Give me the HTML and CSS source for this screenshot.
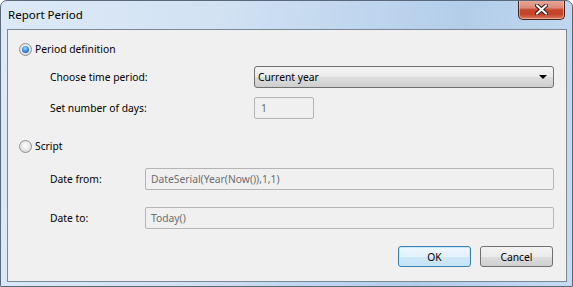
FILE: index.html
```html
<!DOCTYPE html>
<html lang="en">
<head>
    <meta charset="UTF-8">
    <title>Report Period</title>
    <link rel="stylesheet" href="styles.css">
</head>
<body>
    <div class="window">
        <div class="titlebar">
            <span class="title">Report Period</span>
            <div class="close">
                <svg width="13" height="11" viewBox="0 0 13 11">
                    <path d="M2 1.5 L11 9.5 M11 1.5 L2 9.5" stroke="#3a1a14" stroke-width="4" stroke-linecap="square"/>
                    <path d="M2 1.5 L11 9.5 M11 1.5 L2 9.5" stroke="#ffffff" stroke-width="2" stroke-linecap="square"/>
                </svg>
            </div>
        </div>

        <div class="client">
            <div class="radio-row">
                <span class="radio checked"></span>
                <span>Period definition</span>
            </div>

            <div class="field-row first">
                <span class="label wide">Choose time period:</span>
                <div class="dropdown">
                    <span>Current year</span>
                    <span class="arrow"></span>
                </div>
            </div>

            <div class="field-row days">
                <span class="label wide">Set number of days:</span>
                <div class="textbox small">1</div>
            </div>

            <div class="radio-row script">
                <span class="radio"></span>
                <span>Script</span>
            </div>

            <div class="field-row date-from">
                <span class="label">Date from:</span>
                <div class="textbox">DateSerial(Year(Now()),1,1)</div>
            </div>

            <div class="field-row date-to">
                <span class="label">Date to:</span>
                <div class="textbox">Today()</div>
            </div>

            <div class="buttons">
                <button class="btn default">OK</button>
                <button class="btn">Cancel</button>
            </div>
        </div>
    </div>
</body>
</html>
```

FILE: styles.css
```css
body {
    margin: 0;
    background: #ffffff;
    font-family: 'Noto Sans', 'Liberation Sans', sans-serif;
    font-size: 10.3px;
    color: #000;
}
.window {
    width: 573px;
    height: 287px;
    box-sizing: border-box;
    border: 1px solid #59687a;
    border-radius: 7px 7px 1px 1px;
    background: linear-gradient(100deg, #dde9f6 0%, #d2e2f3 35%, #bed5ee 60%, #b3cde9 75%, #c6dbf1 100%);
    display: flex;
    flex-direction: column;
    overflow: hidden;
}
.titlebar {
    height: 28px;
    display: flex;
    align-items: center;
    padding-left: 7px;
}
.title {
    font-size: 11.5px;
    color: #000;
    flex: 1;
    margin-top: -1px;
}
.close {
    align-self: flex-start;
    margin-top: -1px;
    margin-right: 7px;
    width: 47px;
    height: 20px;
    box-sizing: border-box;
    border: 1px solid #47221b;
    border-top: none;
    border-radius: 0 0 5px 5px;
    background: linear-gradient(#e9a89a 0%, #dc8b7a 40%, #c7462c 52%, #c24329 75%, #db7a5e 100%);
    box-shadow: inset 0 0 0 1px rgba(255, 220, 210, 0.5);
    display: flex;
    align-items: center;
    justify-content: center;
}
.client {
    margin: 0 5px 4px 6px;
    height: 253px;
    box-sizing: border-box;
    border: 1px solid #7a8796;
    background: #f0f0f0;
    padding: 13px 12px 0 11px;
}
.radio-row {
    display: flex;
    align-items: center;
    height: 13px;
    gap: 3px;
}
.radio-row span:last-child {
    margin-top: -1px;
}
.radio-row.script {
    margin-top: 21px;
}
.radio {
    width: 13px;
    height: 13px;
    box-sizing: border-box;
    border-radius: 50%;
    border: 1px solid #8c9197;
    background: radial-gradient(circle at 50% 40%, #fdfdfd 0%, #e6e6e6 55%, #cfcfcf 100%);
    display: flex;
    align-items: center;
    justify-content: center;
}
.radio.checked::after {
    content: '';
    width: 7px;
    height: 7px;
    border-radius: 50%;
    background: radial-gradient(circle at 45% 35%, #a8dcff 0%, #3f8fde 45%, #1b4f96 100%);
}
.field-row {
    display: flex;
    align-items: center;
    height: 22px;
    padding-left: 31px;
}
.field-row.first { margin-top: 10px; }
.field-row.days { margin-top: 9px; }
.field-row.date-from { margin-top: 15px; }
.field-row.date-to { margin-top: 17px; }
.label {
    width: 95px;
    flex: none;
}
.label.wide {
    width: 204px;
}
.dropdown {
    flex: 1;
    height: 22px;
    box-sizing: border-box;
    border: 1px solid #707070;
    border-radius: 3px;
    background: linear-gradient(#f3f3f3 0%, #ebebeb 50%, #dddddd 51%, #cfcfcf 100%);
    display: flex;
    align-items: center;
    justify-content: space-between;
    padding: 0 6px 0 3px;
}
.arrow {
    width: 0;
    height: 0;
    border-left: 4px solid transparent;
    border-right: 4px solid transparent;
    border-top: 4px solid #000;
}
.textbox {
    flex: 1;
    height: 22px;
    box-sizing: border-box;
    border: 1px solid #b5b5b5;
    border-radius: 2px;
    background: #f0f0f0;
    color: #6d6d6d;
    display: flex;
    align-items: center;
    padding-left: 5px;
}
.textbox.small {
    flex: none;
    width: 60px;
    padding-left: 6px;
}
.buttons {
    display: flex;
    justify-content: flex-end;
    gap: 9px;
    margin-top: 17px;
    margin-right: 1px;
}
.btn {
    width: 73px;
    height: 21px;
    box-sizing: border-box;
    border: 1px solid #707070;
    border-radius: 3px;
    background: linear-gradient(#f3f3f3 0%, #ebebeb 50%, #dddddd 51%, #cfcfcf 100%);
    font-family: inherit;
    font-size: inherit;
    color: #000;
    padding: 0;
}
.btn.default {
    border-color: #3c7fb1;
    box-shadow: inset 0 0 0 1px #c2e8fa;
    background: linear-gradient(#eef7fd 0%, #e3f1fb 50%, #d0e8f8 51%, #c4e2f6 100%);
}
```
